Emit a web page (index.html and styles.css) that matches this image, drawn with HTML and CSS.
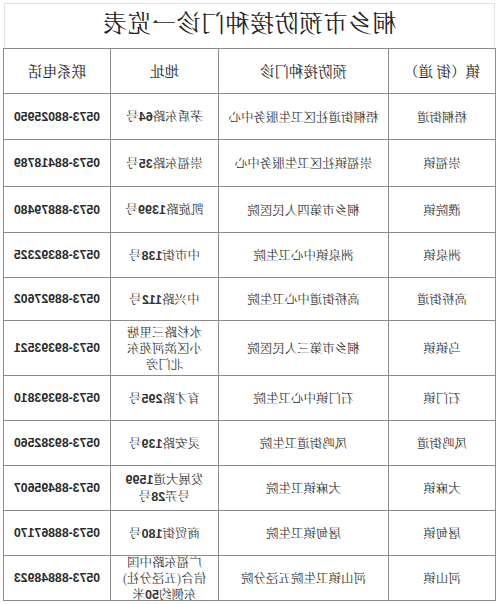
FILE: index.html
```html
<!DOCTYPE html>
<html lang="zh-CN">
<head>
<meta charset="utf-8">
<title>桐乡市预防接种门诊一览表</title>
<link rel="stylesheet" href="styles.css">
</head>
<body>
<div class="page">
  <div class="title">桐乡市预防接种门诊一览表</div>
  <div class="table">
    <div class="cell head">镇（街 道）</div>
    <div class="cell head">预防接种门诊</div>
    <div class="cell head">地址</div>
    <div class="cell head">联系电话</div>

    <div class="cell">梧桐街道</div>
    <div class="cell">梧桐街道社区卫生服务中心</div>
    <div class="cell addr"><p class="in">茅盾东路<span class="num">64</span>号</p></div>
    <div class="cell phone">0573-88025950</div>

    <div class="cell">崇福镇</div>
    <div class="cell">崇福镇社区卫生服务中心</div>
    <div class="cell addr"><p class="in">崇福东路<span class="num">35</span>号</p></div>
    <div class="cell phone">0573-88418789</div>

    <div class="cell">濮院镇</div>
    <div class="cell">桐乡市第四人民医院</div>
    <div class="cell addr"><p class="in">凯旋路<span class="num">1399</span>号</p></div>
    <div class="cell phone">0573-88879480</div>

    <div class="cell">洲泉镇</div>
    <div class="cell">洲泉镇中心卫生院</div>
    <div class="cell addr"><p class="in">中市街<span class="num">138</span>号</p></div>
    <div class="cell phone">0573-88392325</div>

    <div class="cell">高桥街道</div>
    <div class="cell">高桥街道中心卫生院</div>
    <div class="cell addr"><p class="in">中兴路<span class="num">112</span>号</p></div>
    <div class="cell phone">0573-88927602</div>

    <div class="cell">乌镇镇</div>
    <div class="cell">桐乡市第三人民医院</div>
    <div class="cell addr"><p class="in">水杉路三里塘<br>小区滨河苑东<br>北门旁</p></div>
    <div class="cell phone">0573-89393521</div>

    <div class="cell">石门镇</div>
    <div class="cell">石门镇中心卫生院</div>
    <div class="cell addr"><p class="in">育才路<span class="num">295</span>号</p></div>
    <div class="cell phone">0573-89393810</div>

    <div class="cell">凤鸣街道</div>
    <div class="cell">凤鸣街道卫生院</div>
    <div class="cell addr"><p class="in">灵安路<span class="num">139</span>号</p></div>
    <div class="cell phone">0573-89382560</div>

    <div class="cell">大麻镇</div>
    <div class="cell">大麻镇卫生院</div>
    <div class="cell addr"><p class="in">发展大道<span class="num">1599</span><br>号弄<span class="num">28</span>号</p></div>
    <div class="cell phone">0573-88495607</div>

    <div class="cell">屠甸镇</div>
    <div class="cell">屠甸镇卫生院</div>
    <div class="cell addr"><p class="in">商贸街<span class="num">180</span>号</p></div>
    <div class="cell phone">0573-88867170</div>

    <div class="cell">河山镇</div>
    <div class="cell">河山镇卫生院五泾分院</div>
    <div class="cell addr"><p class="in">广福东路中国<br>信合(五泾分社)<br>东侧约<span class="num">50</span>米</p></div>
    <div class="cell phone">0573-88848923</div>
  </div>
</div>
</body>
</html>
```

FILE: styles.css
```css
html, body {
  margin: 0;
  padding: 0;
  background: #ffffff;
  overflow: hidden;
}

.page {
  width: 500px;
  height: 604px;
  overflow: hidden;
  transform: scaleX(-1);
  transform-origin: center center;
  font-family: "Noto Serif CJK SC", "Noto Sans CJK SC", sans-serif;
  color: #2a2a2a;
}

.title {
  margin: 3px 4px 0 5px;
  height: 44px;
  border: 1px solid #e2e2e2;
  border-bottom: none;
  text-align: center;
  font-size: 24px;
  line-height: 36px;
  letter-spacing: 0.5px;
  color: #222222;
}

.table {
  margin: 0 3px 0 4px;
  display: grid;
  grid-template-columns: 106px 169px 107px 106px;
  grid-template-rows: 44px 45px 46px 45px 44px 42px 54px 44px 44px 44px 44px 44px;
  gap: 1px;
  background: #8c8c8c;
  border: 1px solid #8c8c8c;
}

.cell {
  background: #ffffff;
  display: flex;
  align-items: center;
  justify-content: center;
  text-align: center;
  font-size: 12.5px;
  line-height: 16px;
  color: #333333;
  min-height: 0;
  white-space: nowrap;
}

.head {
  font-size: 14.5px;
  color: #222222;
}

.in {
  margin: 0;
  text-align: center;
}

.num {
  font-family: "Liberation Sans", "Noto Sans CJK SC", sans-serif;
  font-weight: bold;
  font-size: 12.5px;
}

.phone {
  font-family: "Liberation Sans", sans-serif;
  font-weight: bold;
  font-size: 12.3px;
  color: #2a2a2a;
}
```
